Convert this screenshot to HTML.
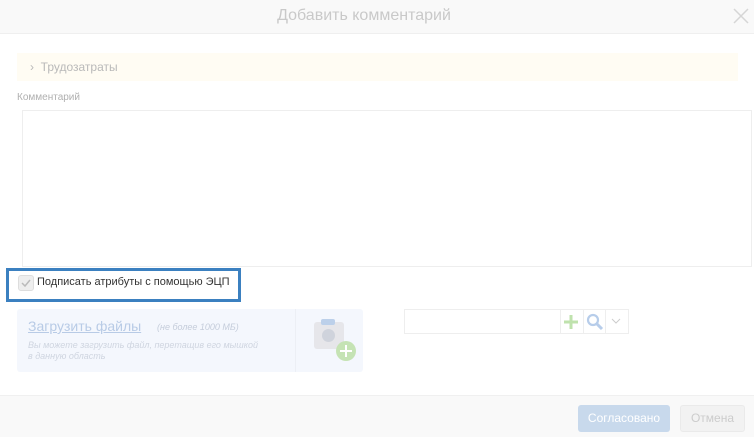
<!DOCTYPE html><html><head><meta charset="utf-8"><style>
body{margin:0;width:754px;height:436px;background:#fff;font-family:"Liberation Sans",sans-serif;position:relative;overflow:hidden}
.a{position:absolute}
</style></head><body>
<div class="a" style="left:0;top:0;width:754px;height:33px;background:#f9f9f9;border-bottom:1px solid #efefef"></div>
<div class="a" style="left:0;top:7px;width:728px;text-align:center;font-size:16px;color:#c9c9c9">Добавить комментарий</div>
<svg class="a" style="left:733px;top:8px" width="16" height="16"><path d="M1 1L15 15M15 1L1 15" stroke="#d6d6d6" stroke-width="1.5"/></svg>
<div class="a" style="left:17px;top:53px;width:721px;height:28px;background:#fffcf3"></div>
<div class="a" style="left:30px;top:60px;font-size:12px;color:#b9b9b9">›&nbsp;&nbsp;Трудозатраты</div>
<div class="a" style="left:17px;top:92px;font-size:10px;color:#b0b0b0">Комментарий</div>
<div class="a" style="left:22px;top:110px;width:728px;height:155px;border:1px solid #eee"></div>
<div class="a" style="left:6px;top:268px;width:229px;height:28px;border:3px solid #3b80c0;background:#fff"></div>
<div class="a" style="left:18px;top:275px;width:14px;height:14px;border:1px solid #ddd;border-radius:3px;background:#eee"></div>
<svg class="a" style="left:20px;top:277px" width="12" height="12"><path d="M2 6L5 9L10 3" stroke="#bbb" stroke-width="1.5" fill="none"/></svg>
<div class="a" style="left:37px;top:276px;font-size:11px;color:#333">Подписать атрибуты с помощью ЭЦП</div>
<div class="a" style="left:17px;top:309px;width:346px;height:63px;background:#f4f7fd;border-radius:3px"></div>
<div class="a" style="left:295px;top:309px;width:1px;height:63px;background:#eceff5"></div>
<div class="a" style="left:28px;top:318px;font-size:14px;color:#b8cbe6;text-decoration:underline">Загрузить файлы</div>
<div class="a" style="left:157px;top:322px;font-size:9px;color:#c5cddb;font-style:italic">(не более 1000 МБ)</div>
<div class="a" style="left:28px;top:340px;font-size:9px;line-height:11px;color:#cfd5e0;font-style:italic;width:265px">Вы можете загрузить файл, перетащив его мышкой<br>в данную область</div>
<div class="a" style="left:314px;top:322px;width:30px;height:27px;background:#e6e6ea;border-radius:3px"></div>
<div class="a" style="left:321px;top:319px;width:14px;height:6px;background:#bcd0ea;border-radius:2px"></div>
<div class="a" style="left:322px;top:329px;width:13px;height:13px;background:#cfd3dc;border-radius:50%"></div>
<div class="a" style="left:336px;top:341px;width:20px;height:20px;background:#c5e3b4;border-radius:50%"></div>
<svg class="a" style="left:336px;top:341px" width="20" height="20"><path d="M10 4V16M4 10H16" stroke="#fff" stroke-width="2"/></svg>
<div class="a" style="left:404px;top:309px;width:223px;height:23px;border:1px solid #eee"></div>
<div class="a" style="left:560px;top:310px;width:1px;height:23px;background:#eee"></div>
<div class="a" style="left:583px;top:310px;width:1px;height:23px;background:#eee"></div>
<div class="a" style="left:605px;top:310px;width:1px;height:23px;background:#eee"></div>
<svg class="a" style="left:562px;top:313px" width="18" height="18"><path d="M9 2V16M2 9H16" stroke="#bfe2ad" stroke-width="3"/></svg>
<svg class="a" style="left:586px;top:313px" width="18" height="18"><circle cx="7" cy="7" r="5" stroke="#b7cdea" stroke-width="2.2" fill="none"/><path d="M11 11L16 16" stroke="#b7cdea" stroke-width="3"/></svg>
<svg class="a" style="left:611px;top:317px" width="10" height="8"><path d="M1 2L5 6L9 2" stroke="#ccc" stroke-width="1" fill="none"/></svg>
<div class="a" style="left:0;top:395px;width:754px;height:41px;background:#f9f9f9;border-top:1px solid #f0f0f0"></div>
<div class="a" style="left:578px;top:405px;width:92px;height:27px;background:#c8d9ec;border-radius:3px;color:#fff;font-size:12px;text-align:center;line-height:27px">Согласовано</div>
<div class="a" style="left:680px;top:405px;width:65px;height:27px;background:#f2f2f2;border:1px solid #eaeaea;box-sizing:border-box;border-radius:3px;color:#ccc;font-size:12px;text-align:center;line-height:25px">Отмена</div>
</body></html>
